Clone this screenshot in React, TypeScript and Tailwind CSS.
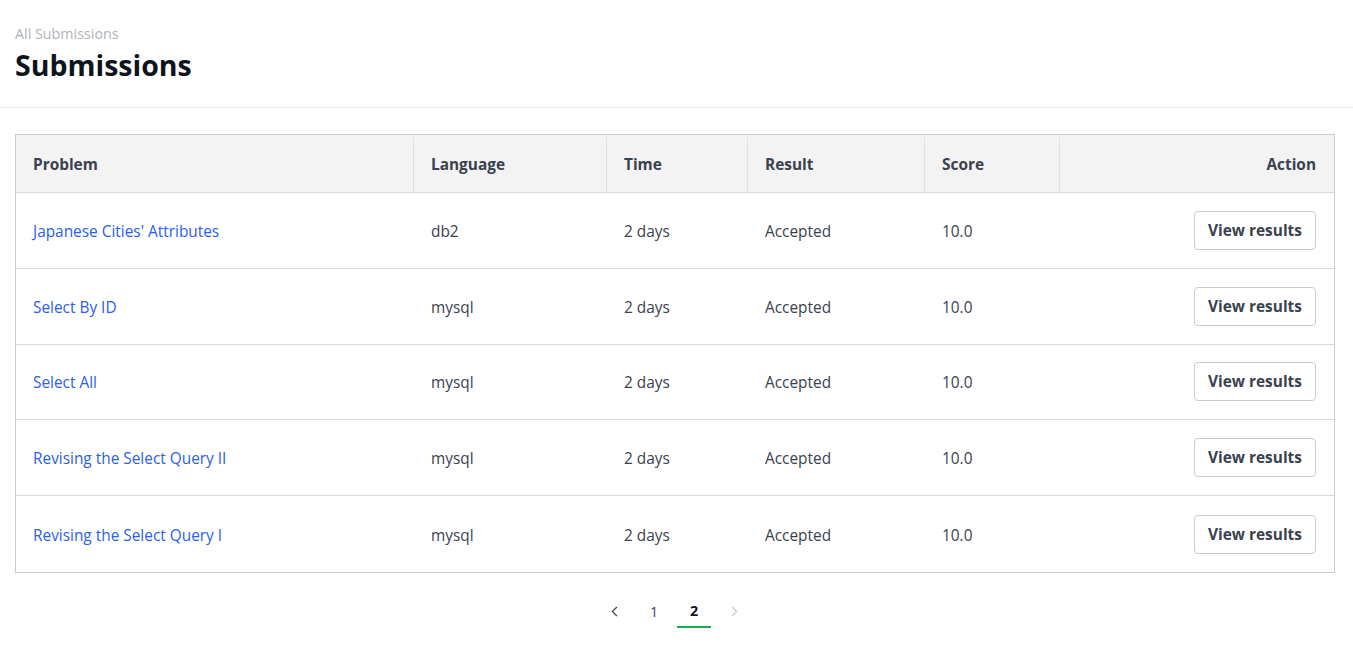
import { ChevronLeft, ChevronRight } from "lucide-react";

const rows = [
  { problem: "Japanese Cities' Attributes", lang: "db2" },
  { problem: "Select By ID", lang: "mysql" },
  { problem: "Select All", lang: "mysql" },
  { problem: "Revising the Select Query II", lang: "mysql" },
  { problem: "Revising the Select Query I", lang: "mysql" },
];

const cols = [
  { label: "Problem", w: "w-[398px]" },
  { label: "Language", w: "w-[193px]" },
  { label: "Time", w: "w-[141px]" },
  { label: "Result", w: "w-[177px]" },
  { label: "Score", w: "w-[135px]" },
];

export default function App() {
  return (
    <div className="min-h-screen bg-white text-[#39424e]" style={{ fontFamily: "'Open Sans', 'Noto Sans', sans-serif" }}>
      {/* Page header */}
      <div className="border-b border-[#e8e8e8] px-[15px] pt-[25px] pb-[23px]">
        <div className="text-[14.3px] leading-[18px] text-[#b0b4ba]">All Submissions</div>
        <h1 className="mt-[3px] text-[28.5px] leading-[38px] font-bold text-[#0e141e]">Submissions</h1>
      </div>

      {/* Table */}
      <div className="ml-[15px] mr-[18px] mt-[26px] border border-[#c9cbd0]">
        <div className="flex h-[58px] items-center border-b border-[#dadada] bg-[#f3f3f3] pt-[2px] text-[15.4px] font-bold">
          {cols.map((c) => (
            <div key={c.label} className={`${c.w} flex h-full items-center border-r border-[#e0e0e0] pl-[17px]`}>
              {c.label}
            </div>
          ))}
          <div className="flex h-full flex-1 items-center justify-end pr-[18px]">Action</div>
        </div>
        {rows.map((r, i) => (
          <div
            key={r.problem}
            className={`flex h-[75.8px] items-center pt-[2px] text-[15.4px] ${i < rows.length - 1 ? "border-b border-[#dadada]" : ""}`}
          >
            <div className="w-[398px] pl-[17px]">
              <a className="text-[#2a60ee]" href="#">{r.problem}</a>
            </div>
            <div className="w-[193px] pl-[17px]">{r.lang}</div>
            <div className="w-[141px] pl-[17px]">2 days</div>
            <div className="w-[177px] pl-[17px]">Accepted</div>
            <div className="w-[135px] pl-[17px]">10.0</div>
            <div className="flex flex-1 justify-end pr-[18px]">
              <button className="-mt-[2px] h-[39px] w-[122px] rounded-[4px] border border-[#c9cbd0] bg-white text-[15.4px] font-bold text-[#39424e]">
                View results
              </button>
            </div>
          </div>
        ))}
      </div>

      {/* Pagination */}
      <div className="mt-[23px] flex items-center justify-center pr-[5px] text-[14.3px]">
        <button className="flex h-[32px] w-[40px] items-center justify-center text-[#39424e]">
          <ChevronLeft size={17} strokeWidth={1.6} />
        </button>
        <button className="flex h-[32px] w-[40px] items-center justify-center text-[#39424e]">1</button>
        <button className="mx-[3px] flex h-[32px] w-[34px] items-center justify-center border-b-2 border-[#1ba94c] font-bold text-[#0e141e]">2</button>
        <button className="flex h-[32px] w-[40px] items-center justify-center text-[#c5c8cc]">
          <ChevronRight size={17} strokeWidth={1.6} />
        </button>
      </div>
    </div>
  );
}
